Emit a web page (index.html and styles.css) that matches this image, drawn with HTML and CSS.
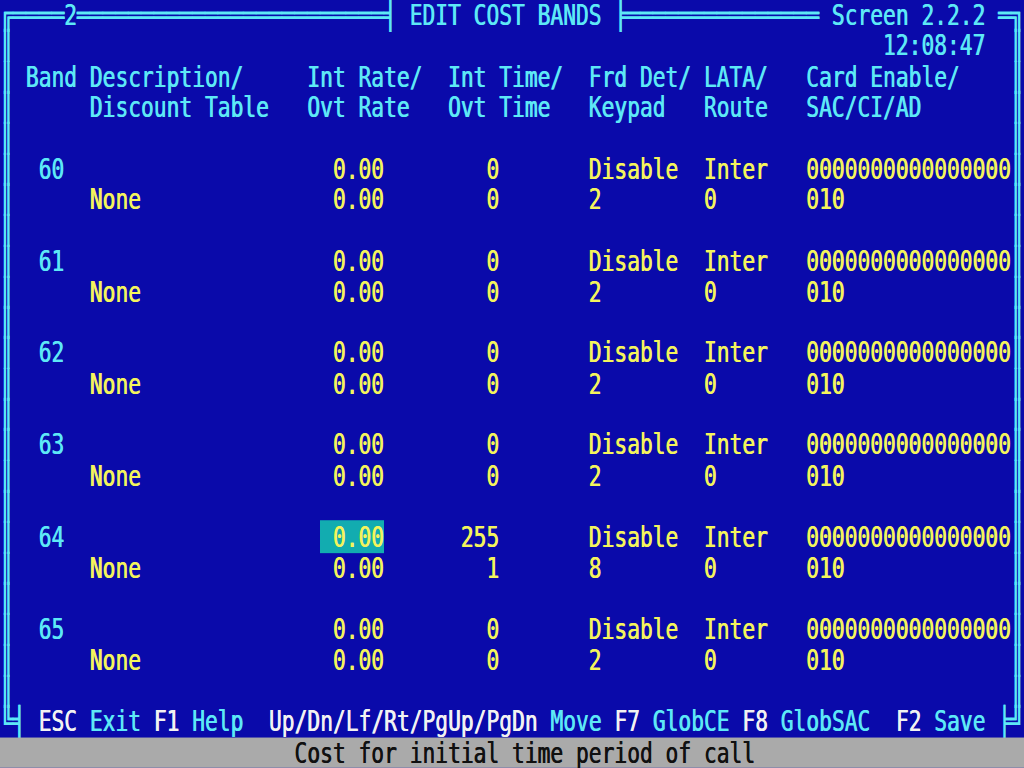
FILE: index.html
```html
<!DOCTYPE html>
<html lang="en">
<head>
<meta charset="utf-8">
<title>Edit Cost Bands - Screen 2.2.2</title>
<link rel="stylesheet" href="styles.css">
</head>
<body>
<main class="screen">
<div class="row">╔════2════════════════════════╡ EDIT COST BANDS ╞═══════════════ Screen 2.2.2 ═╗</div>
<div class="row">║                                                                    12:08:47  ║</div>
<div class="row">║ Band Description/     Int Rate/  Int Time/  Frd Det/ LATA/   Card Enable/    ║</div>
<div class="row">║      Discount Table   Ovt Rate   Ovt Time   Keypad   Route   SAC/CI/AD       ║</div>
<div class="row">║                                                                              ║</div>
<div class="row">║  60                    <span class="y"> 0.00        0       Disable  Inter   0000000000000000</span>║</div>
<div class="row">║      <span class="y">None               0.00        0       2        0       010             </span>║</div>
<div class="row">║                                                                              ║</div>
<div class="row">║  61                    <span class="y"> 0.00        0       Disable  Inter   0000000000000000</span>║</div>
<div class="row">║      <span class="y">None               0.00        0       2        0       010             </span>║</div>
<div class="row">║                                                                              ║</div>
<div class="row">║  62                    <span class="y"> 0.00        0       Disable  Inter   0000000000000000</span>║</div>
<div class="row">║      <span class="y">None               0.00        0       2        0       010             </span>║</div>
<div class="row">║                                                                              ║</div>
<div class="row">║  63                    <span class="y"> 0.00        0       Disable  Inter   0000000000000000</span>║</div>
<div class="row">║      <span class="y">None               0.00        0       2        0       010             </span>║</div>
<div class="row">║                                                                              ║</div>
<div class="row">║  64                    <span class="y"><span class="hl"> 0.00</span>      255       Disable  Inter   0000000000000000</span>║</div>
<div class="row">║      <span class="y">None               0.00        1       8        0       010             </span>║</div>
<div class="row">║                                                                              ║</div>
<div class="row">║  65                    <span class="y"> 0.00        0       Disable  Inter   0000000000000000</span>║</div>
<div class="row">║      <span class="y">None               0.00        0       2        0       010             </span>║</div>
<div class="row">║                                                                              ║</div>
<div class="row">╚╡ <span class="w">ESC</span> Exit <span class="w">F1</span> Help  <span class="w">Up/Dn/Lf/Rt/PgUp/PgDn</span> Move <span class="w">F7</span> GlobCE <span class="w">F8</span> GlobSAC  <span class="w">F2</span> Save ╞╝</div>
<div class="row status">                       Cost for initial time period of call                     </div>
</main>
</body>
</html>
```

FILE: styles.css
```css
html, body {
  margin: 0;
  padding: 0;
  width: 1024px;
  height: 768px;
  overflow: hidden;
  background: #0a0aaa;
}

.screen {
  display: flex;
  flex-direction: column;
  width: 1024px;
  font-family: "DejaVu Sans Mono", monospace;
  font-size: 21.26px;
  color: #5ee8f6;
  background: #0a0aaa;
  text-shadow: 0.6px 0 0;
  transform: scaleY(1.31703);
  transform-origin: left top;
}

.row {
  height: 23.325px;
  line-height: 23.325px;
  white-space: pre;
}

.y {
  color: #f4f45c;
}

.w {
  color: #f2f2f2;
}

.hl {
  background: #12acb0;
}

.status {
  background: #aaaaaa;
  color: #101010;
}
```
